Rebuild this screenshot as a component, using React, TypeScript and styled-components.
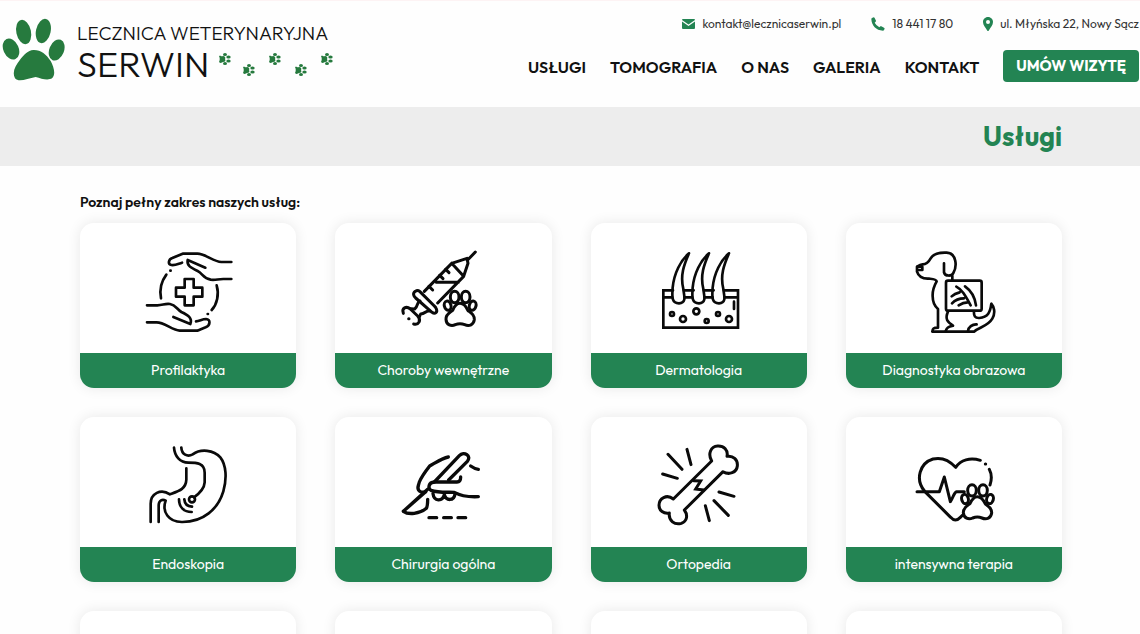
import React from "react";
import styled, { createGlobalStyle } from "styled-components";

const green = "#238453";
const logoGreen = "#267a3e";

const GlobalStyle = createGlobalStyle`
  * { box-sizing: border-box; }
  body {
    margin: 0;
    background: #fefefe;
    color: #111;
    font-family: "Outfit", "Lato", sans-serif;
  }
  #root { overflow: hidden; height: 100vh; }
  a { color: inherit; text-decoration: none; }
`;

const Header = styled.header`
  display: flex;
  justify-content: space-between;
  height: 107px;
  padding: 0 1px 0 2px;
  border-top: 1px solid #fdf3f4;
`;

const Logo = styled.a`
  display: flex;
  align-items: flex-start;
  gap: 12px;
  padding-top: 17px;
`;

const LogoMark = styled.svg`
  width: 63px;
  height: 64px;
  fill: ${logoGreen};
`;

const LogoText = styled.span`
  display: flex;
  flex-direction: column;
  padding-top: 4px;
  font-weight: 300;
`;

const LogoTop = styled.span`
  font-size: 19px;
  line-height: 22px;
`;

const LogoBottom = styled.span`
  display: flex;
  justify-content: space-between;
  width: 256px;
  font-size: 36px;
  line-height: 40px;
`;

const Trail = styled.svg`
  width: 114px;
  height: 26px;
  margin-top: 8px;
  fill: ${logoGreen};
`;

const HeaderSide = styled.div`
  display: flex;
  flex-direction: column;
  align-items: flex-end;
  gap: 16px;
  padding-top: 13px;
`;

const Contacts = styled.address`
  display: flex;
  gap: 30px;
  font-size: 12px;
  font-style: normal;
  line-height: 20px;
  color: #333;
`;

const Contact = styled.a`
  display: flex;
  align-items: center;
  gap: 7px;
  white-space: nowrap;
  svg { fill: ${green}; }
`;

const Nav = styled.nav`
  display: flex;
  align-items: center;
  gap: 24px;
  font-weight: 600;
  white-space: nowrap;
`;

const NavLink = styled.a`
  padding-top: 2px;
  font-size: 16px;
  line-height: 30px;
`;

const BookButton = styled.button`
  height: 32px;
  padding: 0 13px;
  border: 0;
  border-radius: 4px;
  background: ${green};
  color: #fff;
  font-family: inherit;
  font-size: 15px;
  font-weight: 700;
  line-height: 32px;
`;

const Banner = styled.div`
  height: 59px;
  padding: 0 78px 0 80px;
  background: #ededed;
  text-align: right;
`;

const Title = styled.h1`
  margin: 0;
  color: ${green};
  font-size: 27px;
  font-weight: 700;
  line-height: 58px;
`;

const Main = styled.main`
  padding: 26px 78px 30px 80px;
`;

const Intro = styled.h2`
  margin: 0 0 11px;
  font-size: 14px;
  font-weight: 600;
  line-height: 20px;
`;

const Grid = styled.div`
  display: grid;
  grid-template-columns: repeat(4, 1fr);
  gap: 29px 39px;
`;

const Card = styled.a`
  display: block;
  overflow: hidden;
  border-radius: 14px;
  background: #fff;
  box-shadow: 0 0 14px rgba(0, 0, 0, 0.09);
`;

const CardPicture = styled.span`
  display: flex;
  align-items: center;
  justify-content: center;
  height: 130px;
`;

const CardIcon = styled.svg`
  width: 120px;
  height: 110px;
  fill: none;
  stroke: #0a0a0a;
  stroke-width: 8;
  stroke-linecap: round;
  stroke-linejoin: round;
`;

const CardLabel = styled.span`
  display: block;
  height: 35px;
  background: ${green};
  color: #fff;
  font-size: 14px;
  line-height: 35px;
  text-align: center;
`;

const Hands = () => (
  <>
    <path d="M306 81H276C252 80 229 57 204 56H160L129 69C117 73 115 88 126 90C138 92 147 86 158 83" />
    <path d="M228 98L175 75C172 92 184 98 205 108C221 116 221 130 244 134C258 136 266 132 282 132H306" />
    <path d="M53 211H84C101 211 105 205 122 207C139 210 143 223 156 231C176 240 190 249 183 267L132 246" />
    <path d="M53 262H82C106 262 129 286 151 287H204L229 277C243 271 245 253 230 252C219 252 211 258 200 259" />
    <path d="M111 119C96 139 90 164 95 190M262 151C270 178 263 208 247 225" />
    <path d="M123 107h1M235 237h1" />
    <path d="M166 132H193V158H219V185H193V211H166V185H140V158H166Z" />
  </>
);

const Paw = ({ x, y }: { x: number; y: number }) => (
  <g transform={`translate(${x} ${y})`}>
    <ellipse cx="33" cy="18" rx="13" ry="17" />
    <ellipse cx="66" cy="18" rx="13" ry="17" />
    <ellipse cx="12" cy="44" rx="10" ry="14" transform="rotate(-14 12 44)" />
    <ellipse cx="87" cy="44" rx="10" ry="14" transform="rotate(14 87 44)" />
    <path d="M49 37C36 37 31 49 27 58C19 64 6 70 7 85C8 102 23 107 35 101C45 97 53 97 63 101C77 107 90 101 92 86C93 70 80 64 73 59C68 48 62 37 49 37Z" />
  </g>
);

const Syringe = () => (
  <g strokeWidth="9">
    <path d="M252 73L273 51M202 85L248 70L251 85L238 124L202 85M202 85L120 169M238 124L160 204M156 142H222" />
    <path d="M184 103L194 113M166 121L176 131M134 154L145 165" />
    <path d="M93 169C84 175 88 183 94 189L143 232C153 239 160 231 156 222C155 218 154 216 150 213L106 169C101 165 97 166 93 169Z" />
    <path d="M107 198C97 201 102 214 91 222L79 221M136 228C124 225 123 237 109 237L105 246" />
    <path d="M57 235C51 219 66 212 78 222L100 243C112 256 103 271 88 267M73 251h1" />
    <Paw x={178} y={168} />
  </g>
);

const Hair = () => (
  <>
    <path strokeLinejoin="miter" d="M69 187V166H98M131 166H160M191 166H220M251 166H293V278H69V187H96M134 187H156M194 187H217M255 187H293M281 200V222" />
    {[0, 60, 120].map((dx) => (
      <path
        key={dx}
        d={`M${146 + dx} 55C${121 + dx} 76 ${101 + dx} 115 ${97 + dx} 158C${96 + dx} 179 ${91 + dx} 205 ${116 + dx} 205C${140 + dx} 204 ${131 + dx} 181 ${129 + dx} 162C${119 + dx} 121 ${131 + dx} 89 ${146 + dx} 55Z`}
      />
    ))}
    <circle cx="95" cy="237" r="6" />
    <circle cx="128" cy="252" r="9" />
    <circle cx="168" cy="229" r="9" />
    <circle cx="199" cy="258" r="6" />
    <circle cx="233" cy="237" r="6" />
    <circle cx="266" cy="252" r="9" />
  </>
);

const Dog = () => (
  <>
    <path d="M146 85V112C149 125 170 124 174 114C185 95 185 55 154 53C132 52 114 56 106 70C100 81 94 88 82 88C75 89 70 92 65 95V110C70 126 83 132 101 131C112 132 122 132 124 139C116 153 111 166 112 184C112 204 117 213 128 222V278C114 278 112 281 111 290H236C251 276 277 275 291 251C302 232 295 214 288 206C285 231 278 247 252 249C239 250 235 242 236 230M171 122V136" />
    <path d="M67 95H81V105H67M158 230C148 252 156 261 173 272C158 275 155 278 151 288M244 268C231 267 219 277 218 288" />
    <rect x="152" y="137" width="107" height="90" rx="6" />
    <path d="M183 155C201 164 211 184 226 211M209 154C229 168 239 188 242 211M169 184C177 176 184 174 193 172M170 205C181 193 193 190 206 190M190 211C199 205 207 202 217 202" />
  </>
);

const Stomach = () => (
  <>
    <path d="M134 53C136 79 152 98 177 98C202 98 226 99 226 128V157C225 176 213 188 194 202" />
    <path d="M156 53C157 73 174 82 190 73C215 55 253 60 273 82C291 105 293 145 282 184C266 237 222 277 157 276C118 276 97 246 109 212C99 206 89 211 88 225V276" />
    <path d="M64 276V221C64 191 94 174 122 193C149 183 170 177 171 149V115" />
    <circle cx="188" cy="208" r="9" />
    <path d="M165 208C166 222 174 229 188 230M149 208C149 232 164 246 187 246" />
  </>
);

const Scalpel = () => (
  <g strokeWidth="10">
    <path d="M192 81C174 84 157 96 136 108C122 126 111 141 105 156C102 169 96 176 105 183C110 187 117 188 124 185" />
    <path d="M229 141C229 150 226 156 218 156H150C132 157 130 175 140 181C162 189 188 186 210 187C237 202 262 201 282 200M259 108C266 113 272 117 282 118" />
    <path d="M150 156L225 77C239 62 263 78 249 94L193 150M124 185L57 244C72 255 106 252 126 235C130 229 130 220 130 208M57 244L130 178" />
    <path d="M146 191C149 215 174 216 180 194C185 213 209 214 212 192M134 263H157M178 263H201M221 263H244" />
  </g>
);

const Bone = () => (
  <g strokeWidth="9">
    <path d="M214 93L99 207C79 191 56 205 56 226C56 242 70 252 87 249C84 272 103 286 123 280C141 273 143 255 132 240L248 125C266 136 289 128 291 108C293 88 278 76 260 79C264 61 251 47 232 48C211 49 202 72 214 93Z" />
    <path strokeLinejoin="miter" d="M160 152L181 153L166 177L190 180" />
    <path d="M83 73L125 118M140 58L152 104M67 132L111 145M236 186L281 199M221 212L264 256M195 227L207 272" />
  </g>
);

const HeartPulse = () => (
  <g strokeWidth="9">
    <path d="M255 91C224 81 196 90 181 112C161 90 139 81 113 87C74 99 58 148 88 184L166 262C176 273 184 273 195 262L202 255M282 118C291 135 289 150 284 165M270 102h1" />
    <path d="M65 185H132L147 141L165 215C173 206 175 187 184 185H207" />
    <Paw x={197} y={163} />
  </g>
);

const services = [
  { name: "Profilaktyka", icon: <Hands />, top: -6 },
  { name: "Choroby wewnętrzne", icon: <Syringe />, top: -6 },
  { name: "Dermatologia", icon: <Hair />, top: -6 },
  { name: "Diagnostyka obrazowa", icon: <Dog />, top: -6 },
  { name: "Endoskopia", icon: <Stomach />, top: -9 },
  { name: "Chirurgia ogólna", icon: <Scalpel />, top: -9 },
  { name: "Ortopedia", icon: <Bone />, top: -9 },
  { name: "intensywna terapia", icon: <HeartPulse />, top: -9 },
];

const trailPaws = [
  [0, 1], [24, 12], [50, 1], [76, 12], [102, 1],
];

export default function App() {
  return (
    <>
      <GlobalStyle />
      <Header>
        <Logo href="#">
          <LogoMark viewBox="0 0 189 192" aria-hidden="true">
            <ellipse cx="65" cy="42" rx="22" ry="37" transform="rotate(-12 65 42)" />
            <ellipse cx="124" cy="39" rx="22" ry="37" transform="rotate(12 124 39)" />
            <ellipse cx="27" cy="93" rx="23" ry="33" transform="rotate(-24 27 93)" />
            <ellipse cx="164" cy="96" rx="22" ry="33" transform="rotate(22 164 96)" />
            <path d="M94 96C78 97 65 111 53 127C41 143 29 161 39 181C51 195 76 181 101 177C119 182 138 189 151 180C162 169 155 145 146 129C133 109 116 95 94 96Z" />
          </LogoMark>
          <LogoText>
            <LogoTop>LECZNICA WETERYNARYJNA</LogoTop>
            <LogoBottom>
              SERWIN
              <Trail viewBox="0 0 114 26" aria-hidden="true">
                {trailPaws.map(([x, y]) => (
                  <g key={x} transform={`translate(${x} ${y})`}>
                    <path d="M0 3C2 2 2 4 4 3C6 3 7 5 6 6C7 8 6 9 4 9C3 9 2 11 0 9C1 7 1 5 0 3Z" />
                    <ellipse cx="6" cy="1.600" rx="2" ry="1.500" />
                    <ellipse cx="9.500" cy="4" rx="2.200" ry="1.500" />
                    <ellipse cx="9.500" cy="8" rx="2.200" ry="1.500" />
                    <ellipse cx="6" cy="10.600" rx="2" ry="1.500" />
                  </g>
                ))}
              </Trail>
            </LogoBottom>
          </LogoText>
        </Logo>
        <HeaderSide>
          <Contacts>
            <Contact href="mailto:kontakt@lecznicaserwin.pl">
              <svg width="13" height="10" viewBox="0 0 13 10" aria-hidden="true">
                <path d="M1 0H12Q13 0 13 1L6.500 5.500L0 1Q0 0 1 0ZM0 2.400L6.500 6.900L13 2.400V9Q13 10 12 10H1Q0 10 0 9Z" />
              </svg>
              kontakt@lecznicaserwin.pl
            </Contact>
            <Contact href="tel:+48184411780">
              <svg width="14" height="14" viewBox="0 0 42 42" aria-hidden="true">
                <path d="M3 3L8 1Q10 1 11 3L15 11Q15 13 14 14L11 17Q16 26 25 31L28 28Q29 27 31 28L39 32Q41 33 41 35L39 39Q38 41 36 41C15 40 2 26 1 6Q1 4 3 3Z" />
              </svg>
              18 441 17 80
            </Contact>
            <Contact href="#mapa">
              <svg width="10" height="14" viewBox="0 0 30 42" aria-hidden="true">
                <path fillRule="evenodd" d="M15 0C24 0 30 7 30 15C30 24 23 31 17 41Q15 43 13 41C7 31 0 24 0 15C0 7 6 0 15 0ZM15 9A6 6 0 1 0 15 21A6 6 0 1 0 15 9Z" />
              </svg>
              ul. Młyńska 22, Nowy Sącz
            </Contact>
          </Contacts>
          <Nav>
            <NavLink href="#uslugi">USŁUGI</NavLink>
            <NavLink href="#tomografia">TOMOGRAFIA</NavLink>
            <NavLink href="#o-nas">O NAS</NavLink>
            <NavLink href="#galeria">GALERIA</NavLink>
            <NavLink href="#kontakt">KONTAKT</NavLink>
            <BookButton type="button">UMÓW WIZYTĘ</BookButton>
          </Nav>
        </HeaderSide>
      </Header>
      <Banner>
        <Title>Usługi</Title>
      </Banner>
      <Main>
        <Intro>Poznaj pełny zakres naszych usług:</Intro>
        <Grid>
          {services.map(({ name, icon, top }) => (
            <Card key={name} href="#">
              <CardPicture>
                <CardIcon viewBox={`-4 ${top} 360 330`} aria-hidden="true">{icon}</CardIcon>
              </CardPicture>
              <CardLabel>{name}</CardLabel>
            </Card>
          ))}
          {[1, 2, 3, 4].map((n) => (
            <Card key={n} as="div">
              <CardPicture />
            </Card>
          ))}
        </Grid>
      </Main>
    </>
  );
}
